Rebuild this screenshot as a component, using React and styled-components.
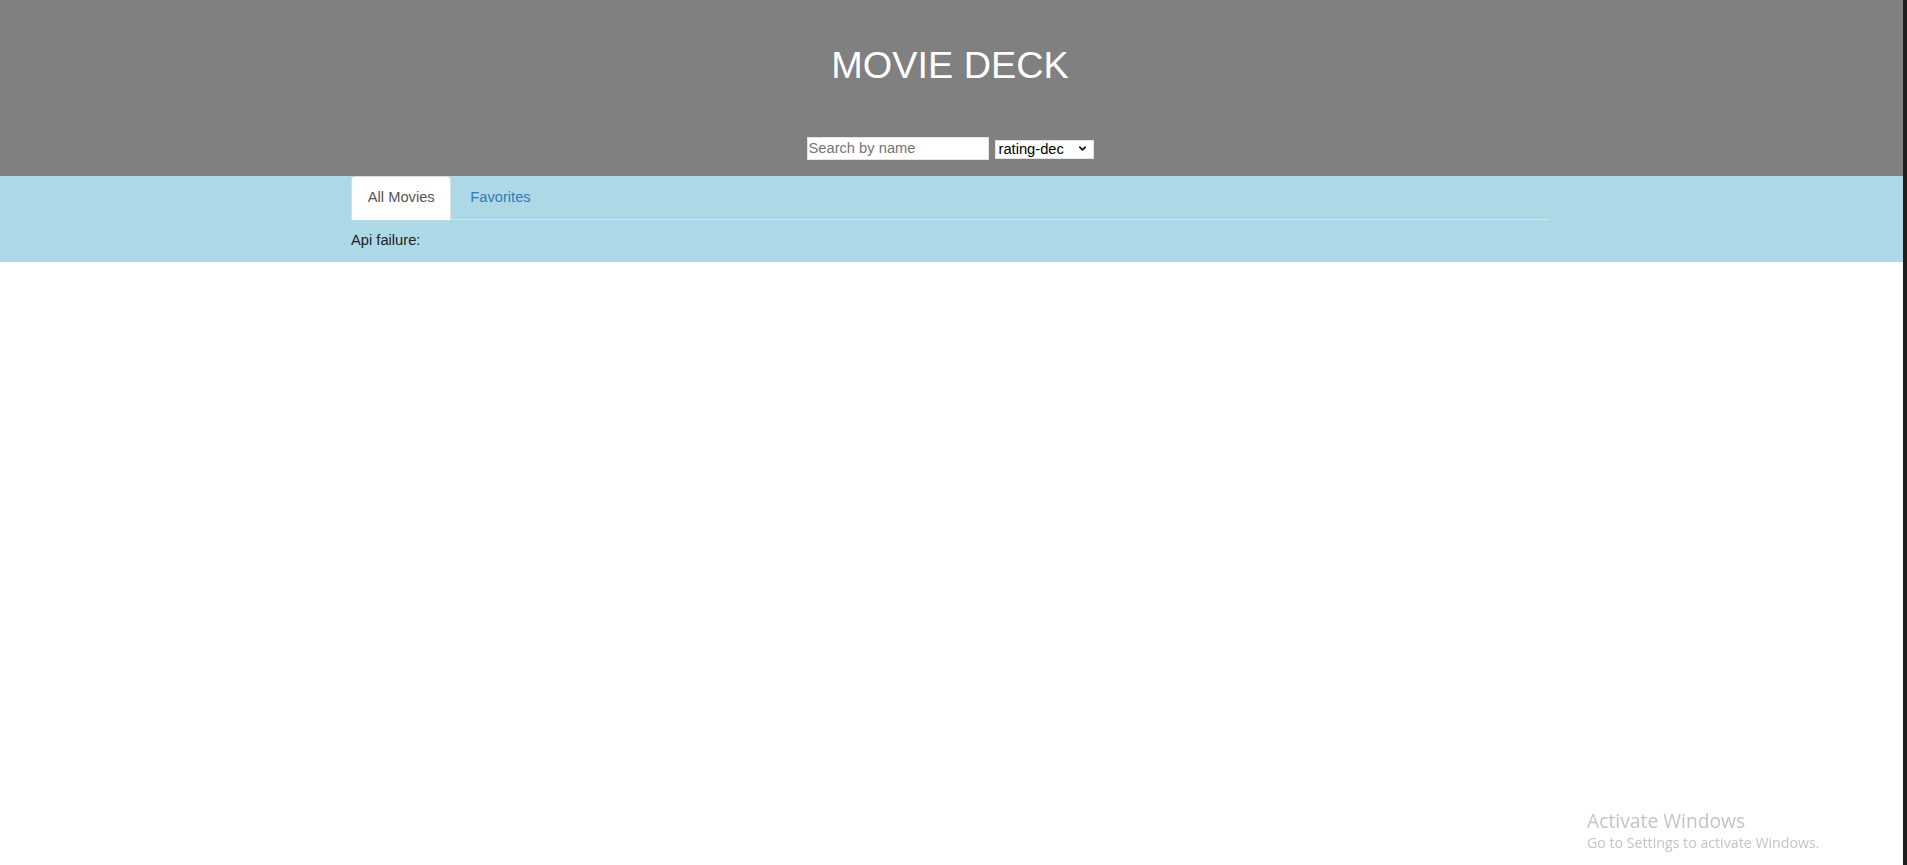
import React, { useState } from "react";
import styled, { createGlobalStyle } from "styled-components";
import { ChevronDown } from "lucide-react";

const Global = createGlobalStyle`
  html, body {
    margin: 0;
    padding: 0;
    background: #fff;
    font-family: "Liberation Sans", Arial, Helvetica, sans-serif;
    font-size: 14.7px;
    line-height: 21px;
    color: #333;
  }
  * { box-sizing: border-box; }
`;

const Screen = styled.div`
  display: flex;
  min-height: 865px;
`;

const Page = styled.div`
  flex: 1;
  min-width: 0;
`;

const EdgeStrip = styled.div`
  width: 4px;
  flex: none;
  background: #1f1f1f;
`;

const Header = styled.header`
  background: #808080;
  height: 176px;
  padding: 45px 3px 0 0;
  display: flex;
  flex-direction: column;
  align-items: center;
`;

const Title = styled.h1`
  margin: 0 0 50px;
  font-size: 37.8px;
  line-height: 1.1;
  font-weight: 400;
  color: #fff;
`;

const Controls = styled.div`
  display: flex;
  align-items: center;
  gap: 6px;
`;

const SearchInput = styled.input`
  width: 182px;
  height: 23px;
  padding: 1px 1px;
  border: 1px solid #e3e3e3;
  background: #fff;
  font-family: "Liberation Sans", Arial, sans-serif;
  font-size: 14.7px;
  color: #222;
  outline: none;
  &::placeholder { color: #757575; }
`;

const SelectWrap = styled.div`
  position: relative;
  width: 99px;
  height: 19px;
`;

const Select = styled.select`
  appearance: none;
  width: 100%;
  height: 100%;
  padding: 0 0 0 3px;
  border: 1px solid #e3e3e3;
  border-radius: 0;
  background: #fff;
  font-family: "Liberation Sans", Arial, sans-serif;
  font-size: 14.7px;
  line-height: 17px;
  color: #000;
  outline: none;
`;

const Caret = styled.span`
  position: absolute;
  right: 6px;
  top: 4px;
  display: flex;
  pointer-events: none;
  color: #111;
`;

const Band = styled.section`
  background: #add8e6;
  padding: 0 3px 11px 0;
`;

const Container = styled.div`
  width: 1198px;
  margin: 0 auto;
`;

const Tabs = styled.ul`
  display: flex;
  list-style: none;
  margin: 0;
  padding: 0;
  border-bottom: 1px solid #ddd;
`;

const TabItem = styled.li`
  margin-bottom: -1px;
  margin-right: 2.1px;
`;

const TabLink = styled.a`
  display: block;
  padding: 9.5px 15.75px 11.5px;
  line-height: 21px;
  border: 1px solid transparent;
  border-radius: 4.2px 4.2px 0 0;
  text-decoration: none;
  cursor: pointer;
  color: ${(p) => (p.$active ? "#555" : "#337ab7")};
  background: ${(p) => (p.$active ? "#fff" : "transparent")};
  border-color: ${(p) => (p.$active ? "#ddd #ddd transparent" : "transparent")};
`;

const Message = styled.div`
  margin-top: 10px;
  line-height: 21px;
  color: #222;
`;

const Watermark = styled.div`
  position: fixed;
  left: 1587px;
  top: 809px;
  color: #c4c4c4;
  font-family: "Open Sans", "Noto Sans", sans-serif;
  pointer-events: none;
`;

const WatermarkTitle = styled.div`
  font-size: 19.3px;
  line-height: 24px;
`;

const WatermarkText = styled.div`
  font-size: 14.2px;
  line-height: 20px;
`;

const tabs = ["All Movies", "Favorites"];

export default function App() {
  const [active, setActive] = useState("All Movies");
  return (
    <>
      <Global />
      <Screen>
        <Page>
          <Header>
            <Title>MOVIE DECK</Title>
            <Controls>
              <SearchInput placeholder="Search by name" />
              <SelectWrap>
                <Select defaultValue="rating-dec">
                  <option value="rating-dec">rating-dec</option>
                  <option value="rating-inc">rating-inc</option>
                </Select>
                <Caret>
                  <ChevronDown size={11} strokeWidth={3.5} />
                </Caret>
              </SelectWrap>
            </Controls>
          </Header>
          <Band>
            <Container>
              <Tabs>
                {tabs.map((t) => (
                  <TabItem key={t}>
                    <TabLink $active={active === t} onClick={() => setActive(t)}>
                      {t}
                    </TabLink>
                  </TabItem>
                ))}
              </Tabs>
              <Message>Api failure:</Message>
            </Container>
          </Band>
        </Page>
        <EdgeStrip />
      </Screen>
      <Watermark>
        <WatermarkTitle>Activate Windows</WatermarkTitle>
        <WatermarkText>Go to Settings to activate Windows.</WatermarkText>
      </Watermark>
    </>
  );
}
